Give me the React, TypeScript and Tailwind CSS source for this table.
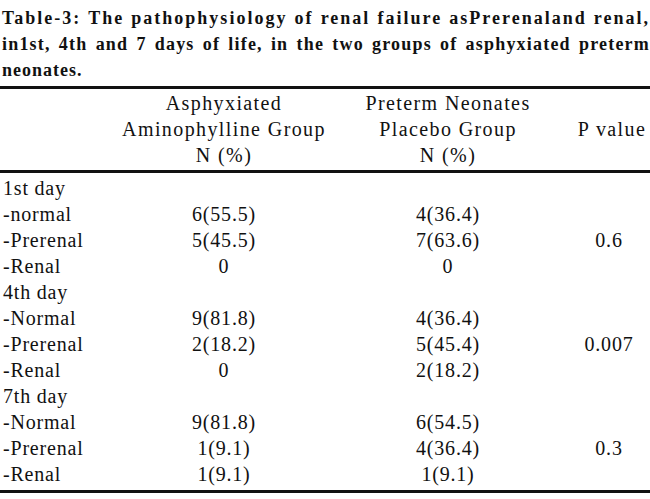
import React from 'react';

type Row = { label: string; a?: string; b?: string; p?: string };

const rows: Row[] = [
  { label: '1st day' },
  { label: '-normal', a: '6(55.5)', b: '4(36.4)' },
  { label: '-Prerenal', a: '5(45.5)', b: '7(63.6)', p: '0.6' },
  { label: '-Renal', a: '0', b: '0' },
  { label: '4th day' },
  { label: '-Normal', a: '9(81.8)', b: '4(36.4)' },
  { label: '-Prerenal', a: '2(18.2)', b: '5(45.4)', p: '0.007' },
  { label: '-Renal', a: '0', b: '2(18.2)' },
  { label: '7th day' },
  { label: '-Normal', a: '9(81.8)', b: '6(54.5)' },
  { label: '-Prerenal', a: '1(9.1)', b: '4(36.4)', p: '0.3' },
  { label: '-Renal', a: '1(9.1)', b: '1(9.1)' },
];

const grid = 'grid grid-cols-[120px_208px_240px_82px]';

export default function App() {
  return (
    <div className="w-[650px] h-[499px] bg-white text-[#111] font-['Liberation_Serif',serif] overflow-hidden">
      {/* Caption */}
      <div className="pt-[5px] font-bold text-[18px] leading-[26px]">
        <div className="text-justify [text-align-last:justify] pl-[2px] tracking-[2px]">
          Table-3: The pathophysiology of renal failure asPrerenaland renal,
        </div>
        <div className="text-justify [text-align-last:justify] pl-[2px] tracking-[1.2px]">
          in1st, 4th and 7 days of life, in the two groups of asphyxiated preterm
        </div>
        <div className="pl-[2px] tracking-[1px]">neonates.</div>
      </div>

      <div className="mt-[3px] border-t-[3px] border-[#111]" />

      {/* Header */}
      <div className={`${grid} text-[20px] leading-[26px] tracking-[1.4px] pt-[1px]`}>
        <div />
        <div className="text-center">
          <div>Asphyxiated</div>
          <div>Aminophylline Group</div>
          <div>N (%)</div>
        </div>
        <div className="text-center">
          <div>Preterm Neonates</div>
          <div>Placebo Group</div>
          <div>N (%)</div>
        </div>
        <div className="flex flex-col justify-center text-center pl-[6px]">P value</div>
      </div>

      <div className="mt-[2px] border-t-[3px] border-[#111]" />

      {/* Body */}
      <div className="pt-[2px] text-[20px] leading-[26px] tracking-[0.8px]">
        {rows.map((r, i) => (
          <div key={i} className={grid}>
            <div className="pl-[3px]">{r.label}</div>
            <div className="text-center">{r.a}</div>
            <div className="text-center">{r.b}</div>
            <div className="text-center">{r.p}</div>
          </div>
        ))}
      </div>

      <div className="mt-[3px] border-t-[3px] border-[#111]" />
    </div>
  );
}
